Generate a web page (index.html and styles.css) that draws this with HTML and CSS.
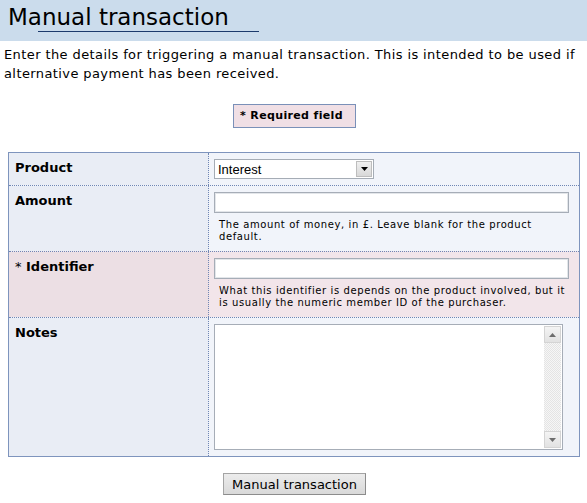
FILE: index.html
```
<!DOCTYPE html>
<html>
<head>
<meta charset="utf-8">
<link rel="stylesheet" href="styles.css">
</head>
<body>
<div class="header">
  <h1 class="title">Manual transaction</h1>
</div>
<p class="intro">Enter the details for triggering a manual transaction. This is intended to be used if alternative payment has been received.</p>
<div class="required-wrap">
  <div class="required">* Required field</div>
</div>
<div class="form">
  <div class="row">
    <div class="label">Product</div>
    <div class="field">
      <div class="select">
        <span class="select-text">Interest</span>
        <span class="select-btn"><svg width="7" height="4" viewBox="0 0 7 4"><path d="M0 0h7L3.5 4z" fill="#000"/></svg></span>
      </div>
    </div>
  </div>
  <div class="row">
    <div class="label">Amount</div>
    <div class="field">
      <input class="text" type="text">
      <div class="help">The amount of money, in £. Leave blank for the product default.</div>
    </div>
  </div>
  <div class="row req">
    <div class="label"><span class="star">*</span> Identifier</div>
    <div class="field">
      <input class="text" type="text">
      <div class="help">What this identifier is depends on the product involved, but it is usually the numeric member ID of the purchaser.</div>
    </div>
  </div>
  <div class="row">
    <div class="label">Notes</div>
    <div class="field">
      <div class="notes">
        <textarea class="notes-area"></textarea>
        <div class="scrollbar">
          <div class="sb-btn"><svg width="7" height="4" viewBox="0 0 7 4"><path d="M3.5 0L7 4H0z" fill="#6d6d6d"/></svg></div>
          <div class="sb-track"></div>
          <div class="sb-btn"><svg width="7" height="4" viewBox="0 0 7 4"><path d="M0 0h7L3.5 4z" fill="#6d6d6d"/></svg></div>
        </div>
      </div>
    </div>
  </div>
</div>
<div class="actions">
  <button class="submit" type="button">Manual transaction</button>
</div>
</body>
</html>
```
FILE: styles.css
```
html, body {
  margin: 0;
  padding: 0;
  background: #fff;
}
body {
  font-family: "DejaVu Sans", Verdana, sans-serif;
  color: #000;
}
.header {
  background: #cbdcec;
  height: 41px;
  padding-left: 8px;
  box-sizing: border-box;
  padding-top: 4px;
}
.title {
  display: inline-block;
  margin: 0;
  font-size: 23px;
  font-weight: normal;
  line-height: 27px;
}
.title::after {
  content: "";
  display: block;
  margin-left: 30px;
  margin-right: -30px;
  border-top: 1px solid #1c3a6c;
  margin-top: 0;
}
.intro {
  margin: 4px 4px 0 4px;
  font-size: 13px;
  letter-spacing: 0.4px;
  line-height: 19px;
}
.required-wrap {
  display: flex;
  justify-content: center;
  padding-top: 21px;
  padding-left: 2px;
}
.required {
  background: #f0dfe5;
  border: 1px solid #7a90b8;
  font-size: 11px;
  letter-spacing: 0.35px;
  font-weight: bold;
  padding: 5px 12px 5px 6px;
  line-height: 12px;
}
.form {
  margin: 24px 7px 0 8px;
  border: 1px solid #7e94bd;
}
.row {
  display: grid;
  grid-template-columns: 200px 1fr;
  border-top: 1px dotted #6f86b4;
  background: #f1f4fa;
}
.row:first-child {
  border-top: none;
}
.label {
  background: #e9edf5;
  border-right: 1px dotted #6f86b4;
  font-size: 13px;
  font-weight: bold;
  padding: 7px 6px;
  line-height: 15px;
}
.row.req {
  background: #f2e5ea;
}
.row.req .label {
  background: #ecdfe4;
}
.star {
  font-weight: normal;
}
.field {
  padding: 6px 10px 6px 5px;
}
.select {
  display: flex;
  align-items: center;
  width: 160px;
  height: 20px;
  box-sizing: border-box;
  border: 1px solid #a5acb5;
  background: #fff;
  padding: 1px;
}
.select-text {
  flex: 1;
  font-family: "Liberation Sans", Arial, sans-serif;
  font-size: 13px;
  padding-left: 2px;
}
.select-btn {
  width: 16px;
  height: 16px;
  box-sizing: border-box;
  border: 1px solid #bdbdbd;
  background: linear-gradient(#f0f0f0, #d8d8d8);
  display: flex;
  align-items: center;
  justify-content: center;
}
.text {
  display: block;
  width: 100%;
  height: 21px;
  box-sizing: border-box;
  border: 1px solid #a6adb7;
  box-shadow: inset 0 0 0 1px #e3e6ea;
  background: #fff;
  margin: 0;
  padding: 0 3px;
}
.help {
  font-size: 10px;
  letter-spacing: 0.6px;
  line-height: 12px;
  margin: 6px 0 2px 5px;
}
.notes {
  display: flex;
  width: 349px;
  height: 126px;
  box-sizing: border-box;
  border: 1px solid #a6adb7;
  background: #fff;
}
.notes-area {
  flex: 1;
  border: none;
  resize: none;
  outline: none;
  margin: 0;
  padding: 2px;
}
.scrollbar {
  width: 17px;
  display: flex;
  flex-direction: column;
  padding: 1px 1px 1px 0;
}
.sb-btn {
  height: 17px;
  box-sizing: border-box;
  border: 1px solid #d4d4d4;
  background: linear-gradient(#f4f4f4, #e2e2e2);
  display: flex;
  align-items: center;
  justify-content: center;
}
.sb-track {
  flex: 1;
  background-color: #eeeeee;
  background-image: repeating-conic-gradient(#e4e4e4 0 25%, #f6f6f6 0 50%);
  background-size: 2px 2px;
}
.actions {
  display: flex;
  justify-content: center;
  padding: 16px 0 0 2px;
}
.submit {
  font-family: "DejaVu Sans", Verdana, sans-serif;
  font-size: 13px;
  height: 22px;
  padding: 0 8px;
  border: 1px solid #a4a4a4;
  border-right-color: #8c8c8c;
  border-bottom-color: #8c8c8c;
  background: linear-gradient(#ececec, #d9d9d9);
  color: #000;
  margin: 0;
}
```
